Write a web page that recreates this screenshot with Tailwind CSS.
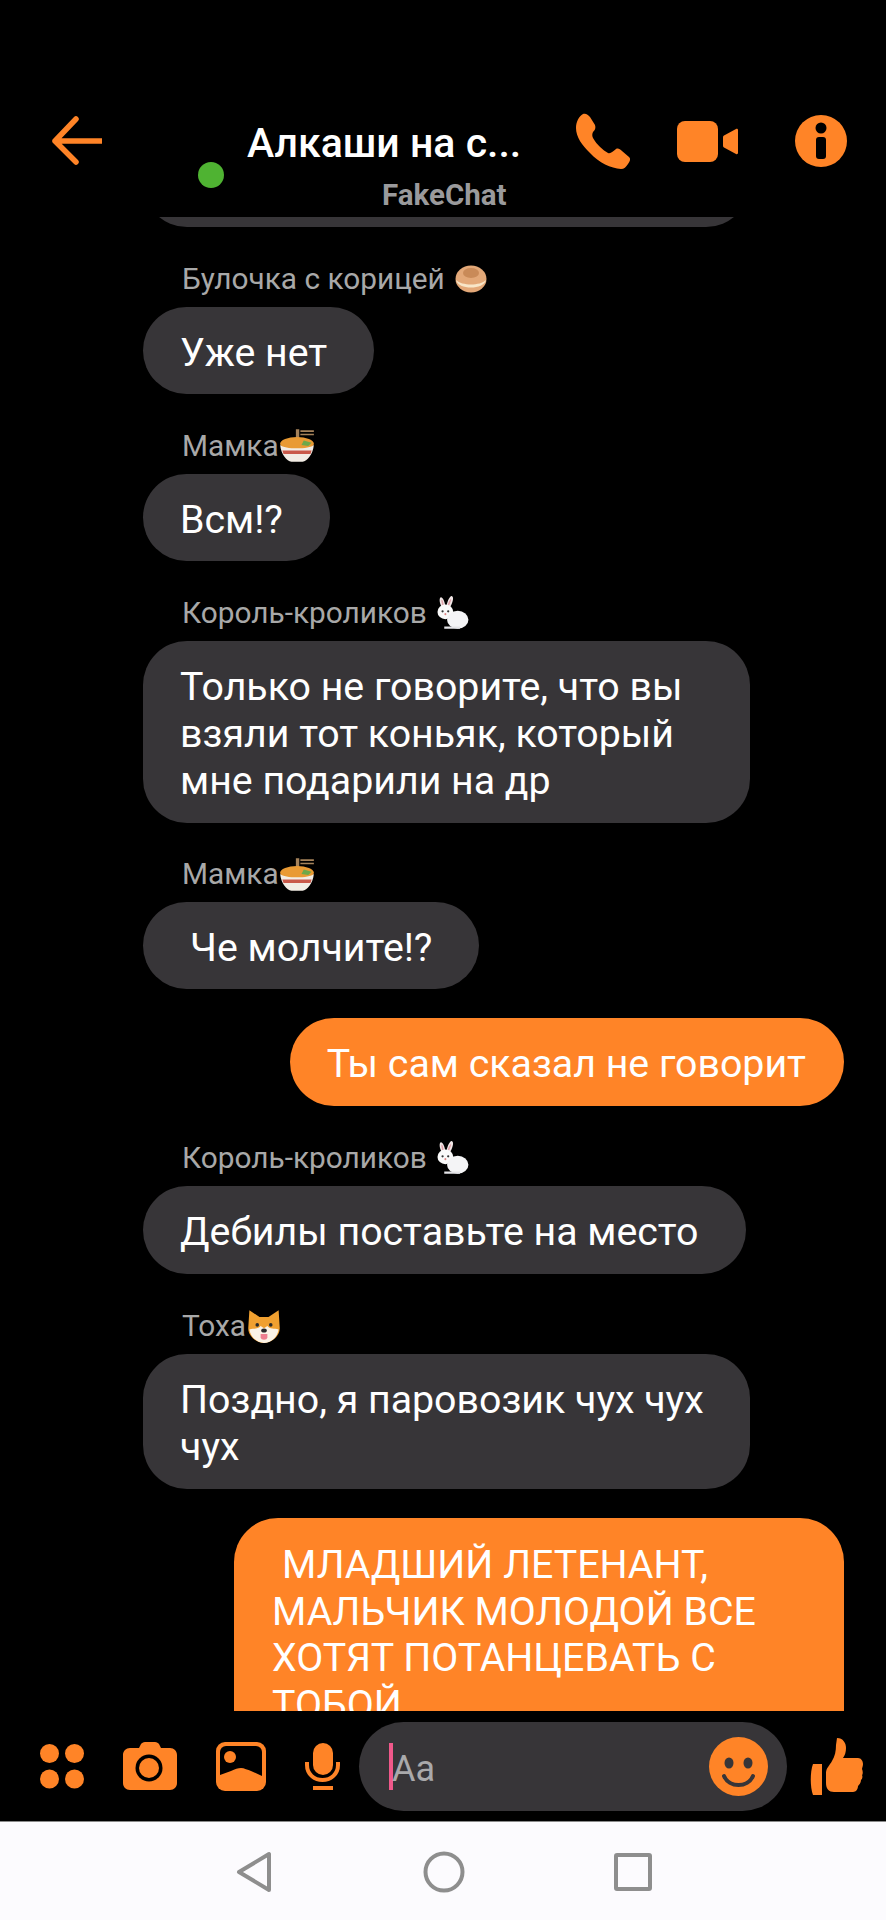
<!DOCTYPE html>
<html lang="ru">
  <head>
    <meta charset="UTF-8" />
    <meta name="viewport" content="width=device-width, initial-scale=1.0" />
    <title>FakeChat</title>
    <script src="https://cdn.jsdelivr.net/npm/@tailwindcss/browser@4"></script>
  </head>
  <body class="bg-black">
    <!-- Emoji drawn once, reused in the sender names -->
    <svg class="hidden" xmlns="http://www.w3.org/2000/svg">
      <symbol id="bagel" viewBox="0 0 32 32">
        <ellipse cx="16" cy="16" rx="15.500" ry="13.500" fill="#e3a878" />
        <ellipse cx="16" cy="10" rx="8" ry="5" fill="#c98a58" />
        <path d="M1 17c6 6 24 6 30 0-2 10-28 10-30 0Z" fill="#f8e6c8" />
      </symbol>
      <symbol id="bowl" viewBox="0 0 32 32">
        <path d="M15 1h3v9h-3zM19 2h12v1.500H19zM19 5h12v1.500H19z" fill="#a5825a" />
        <ellipse cx="16" cy="14" rx="15" ry="6" fill="#e99a34" />
        <path d="M22 11l7 2-3 3-6-1z" fill="#6ea84a" />
        <path d="M1 15c4 4 26 4 30 0-1 9-6 14-10 15H11C7 29 2 24 1 15Z" fill="#f2ece4" />
        <path d="M3 20h26l-1 3H4z" fill="#c9594a" />
      </symbol>
      <symbol id="rabbit" viewBox="0 0 32 32">
        <path d="M7 2c2 0 4 5 4 9H8C6 8 5 3 7 2ZM17 1c2 1 0 7-2 10h-3c0-4 3-11 5-10Z" fill="#f1e6e6" />
        <path d="M7.500 4c1 0 2 3 2 6H8.500C8 8 7 5 7.500 4ZM16 3.500c.5 1-1 4-2 6.500h-1c.3-3 2-6 3-6.500Z" fill="#e0a0a8" />
        <ellipse cx="11" cy="15" rx="7" ry="6.500" fill="#fafafa" />
        <ellipse cx="22" cy="22" rx="9.500" ry="8" fill="#f4f4f6" />
        <path d="M10 28h14v2H10z" fill="#e4e4e8" />
        <circle cx="8.500" cy="14.500" r="1" fill="#333" />
        <circle cx="13.500" cy="14.500" r="1" fill="#333" />
        <circle cx="11" cy="17" r=".9" fill="#d88" />
      </symbol>
      <symbol id="shiba" viewBox="0 0 32 32">
        <path d="M3 2l9 6h8l9-6 1 16c0 7-7 13-14 13S2 25 2 18Z" fill="#f0a030" />
        <path d="M3 19c4-1 8 0 10-3l3 2 3-2c2 3 6 2 10 3-1 7-7 12-13 12S4 26 3 19Z" fill="#fbf3e6" />
        <circle cx="10" cy="15" r="1.600" fill="#2a2a2a" />
        <circle cx="22" cy="15" r="1.600" fill="#2a2a2a" />
        <ellipse cx="16" cy="20" rx="2.500" ry="1.800" fill="#2a2a2a" />
        <path d="M13 23h6v3c0 3-6 3-6 0Z" fill="#ee7f8f" />
      </symbol>
    </svg>

    <div class="w-[886px] h-[1920px] flex flex-col overflow-hidden bg-black text-white font-[family-name:Roboto,sans-serif]">
      <!-- Header -->
      <div class="h-[217px] shrink-0 flex items-start pt-[113px] pl-[52px]">
        <svg class="mt-[3px] shrink-0" width="50" height="50" viewBox="0 0 50 50" fill="none" stroke="#ff8427" stroke-width="5.500" stroke-linecap="round" stroke-linejoin="round">
          <path d="M24 3 3 25l21 21M3 25h46" />
        </svg>
        <div class="ml-[96px] mt-[49px] w-[26px] h-[26px] rounded-full bg-[#4fb332] shrink-0"></div>
        <div class="ml-[23px] w-[280px] shrink-0 whitespace-nowrap">
          <p class="text-[41px] leading-[50px] font-medium mt-[5px]">Алкаши на с...</p>
          <p class="ml-[135px] mt-[11px] text-[29.500px] leading-[32px] font-bold text-[#9a9a9c]">FakeChat</p>
        </div>
        <svg class="ml-[48px] shrink-0" width="57" height="57" viewBox="0 0 57 57" fill="#ff8427">
          <path d="M8 1c3-1 5 1 7 3l5 8c1 3 0 5-2 7-1 2-1 4 0 6 4 7 10 12 15 15 3 1 5-2 8-4 2-1 4 0 6 2l7 6c2 2 1 4-1 7-2 3-4 5-7 5-10-1-22-6-31-16C7 32 1 24 1 15 1 9 4 3 8 1Z" />
        </svg>
        <svg class="ml-[44px] mt-[8px] shrink-0" width="62" height="42" viewBox="0 0 62 42" fill="#ff8427">
          <rect x="1" y="0" width="41" height="41" rx="8" />
          <path d="M47 17c0-1 0-2 1-2.500L60 8c1-.5 2 0 2 1v23c0 1-1 1.500-2 1l-12-6.500c-1-.5-1-1.500-1-2.500Z" />
        </svg>
        <svg class="ml-[57px] mt-[2px] shrink-0" width="52" height="52" viewBox="0 0 52 52">
          <circle cx="26" cy="26" r="26" fill="#ff8427" />
          <circle cx="26" cy="13" r="5.500" fill="#000" />
          <rect x="21" y="22" width="10" height="22" rx="3" fill="#000" />
        </svg>
      </div>

      <!-- Messages -->
      <div class="h-[1494px] shrink-0 overflow-hidden flex flex-col items-start pl-[143px] pr-[42px]">
        <!-- bottom of the bubble scrolled under the header -->
        <div class="w-[607px] h-[10px] shrink-0 overflow-hidden">
          <div class="h-[88px] -mt-[78px] rounded-[44px] bg-[#373538]"></div>
        </div>

        <div class="mt-[29px] h-[51px] pb-[5px] flex items-center gap-[8px] pl-[39px] text-[29.800px] text-[#a8a8a8] shrink-0">
          <span>Булочка с корицей</span>
          <svg width="36" height="32"><use href="#bagel" /></svg>
        </div>
        <div class="w-fit max-w-[607px] shrink-0 rounded-[44px] bg-[#373538] pl-[37px] pr-[47px] pt-[23px] pb-[17px] text-[39.300px] leading-[47px]">Уже нет</div>

        <div class="mt-[29px] h-[51px] pb-[5px] flex items-center pl-[39px] text-[29.800px] text-[#a8a8a8] shrink-0">
          <span>Мамка</span>
          <svg width="36" height="36"><use href="#bowl" /></svg>
        </div>
        <div class="w-fit max-w-[607px] shrink-0 rounded-[44px] bg-[#373538] pl-[37px] pr-[47px] pt-[23px] pb-[17px] text-[39.300px] leading-[47px]">Всм!?</div>

        <div class="mt-[29px] h-[51px] pb-[5px] flex items-center gap-[6px] pl-[39px] text-[29.800px] text-[#a8a8a8] shrink-0">
          <span>Король-кроликов</span>
          <svg width="36" height="36"><use href="#rabbit" /></svg>
        </div>
        <div class="w-fit max-w-[607px] shrink-0 rounded-[44px] bg-[#373538] px-[37px] pt-[23px] pb-[18px] text-[39.300px] leading-[47px]">Только не говорите, что вы взяли тот коньяк, который мне подарили на др</div>

        <div class="mt-[29px] h-[50px] pb-[5px] flex items-center pl-[39px] text-[29.800px] text-[#a8a8a8] shrink-0">
          <span>Мамка</span>
          <svg width="36" height="36"><use href="#bowl" /></svg>
        </div>
        <div class="w-fit max-w-[607px] shrink-0 rounded-[44px] bg-[#373538] pl-[47px] pr-[47px] pt-[23px] pb-[17px] text-[39.300px] leading-[47px]">Че молчите!?</div>

        <div class="self-end mt-[29px] w-fit max-w-[610px] shrink-0 rounded-[44px] bg-[#ff8427] pl-[37px] pr-[38px] pt-[23px] pb-[18px] text-[39.300px] leading-[47px]">Ты сам сказал не говорит</div>

        <div class="mt-[29px] h-[51px] pb-[5px] flex items-center gap-[6px] pl-[39px] text-[29.800px] text-[#a8a8a8] shrink-0">
          <span>Король-кроликов</span>
          <svg width="36" height="36"><use href="#rabbit" /></svg>
        </div>
        <div class="w-fit max-w-[607px] shrink-0 rounded-[44px] bg-[#373538] pl-[37px] pr-[48px] pt-[23px] pb-[18px] text-[39.300px] leading-[47px]">Дебилы поставьте на место</div>

        <div class="mt-[29px] h-[51px] pb-[5px] flex items-center pl-[39px] text-[29.800px] text-[#a8a8a8] shrink-0">
          <span>Тоха</span>
          <svg width="36" height="36"><use href="#shiba" /></svg>
        </div>
        <div class="w-fit max-w-[607px] shrink-0 rounded-[44px] bg-[#373538] px-[37px] pt-[23px] pb-[18px] text-[39.300px] leading-[47px]">Поздно, я паровозик чух чух чух</div>

        <div class="self-end mt-[29px] w-[610px] shrink-0 rounded-t-[44px] bg-[#ff8427] px-[38px] pt-[24px] pb-[19px] text-[39.300px] leading-[46.500px]"><span class="pl-[10px]">МЛАДШИЙ ЛЕТЕНАНТ,</span> МАЛЬЧИК МОЛОДОЙ ВСЕ ХОТЯТ ПОТАНЦЕВАТЬ С ТОБОЙ</div>
      </div>

      <!-- Composer -->
      <div class="h-[110px] shrink-0 flex items-center pl-[40px]">
        <svg width="44" height="45" viewBox="0 0 44 45" fill="#ff8427" class="shrink-0">
          <circle cx="9.500" cy="9.500" r="9.500" /><circle cx="34.500" cy="9.500" r="9.500" />
          <circle cx="9.500" cy="35" r="9.500" /><circle cx="34.500" cy="35" r="9.500" />
        </svg>
        <svg width="54" height="48" viewBox="0 0 54 48" class="ml-[39px] shrink-0">
          <path d="M7 6h9l2-4c1-1 2-2 4-2h10c2 0 3 1 4 2l2 4h9c4 0 7 3 7 7v28c0 4-3 7-7 7H7c-4 0-7-3-7-7V13c0-4 3-7 7-7Z" fill="#ff8427" />
          <circle cx="26" cy="26" r="13.500" fill="#000" />
          <circle cx="26" cy="26" r="10" fill="#ff8427" />
        </svg>
        <svg width="50" height="49" viewBox="0 0 50 49" class="ml-[39px] shrink-0">
          <rect x="0" y="0" width="50" height="49" rx="9" fill="#ff8427" />
          <rect x="4" y="4" width="42" height="36" rx="6" fill="#000" />
          <circle cx="14" cy="15" r="6" fill="#ff8427" />
          <path d="M4 33 15 29c4-2 7-3 10-3s7 2 10 3l11 5v10H4Z" fill="#ff8427" />
        </svg>
        <svg width="35" height="47" viewBox="0 0 35 47" fill="none" class="ml-[39px] shrink-0">
          <rect x="8" y="0" width="20" height="32" rx="10" fill="#ff8427" />
          <path d="M2 19v3c0 9 7 15 15.500 15S33 31 33 22v-3" stroke="#ff8427" stroke-width="4" />
          <rect x="8" y="43" width="20" height="4" fill="#ff8427" />
        </svg>
        <div class="ml-[19px] w-[428px] h-[89px] shrink-0 rounded-full bg-[#373538] flex items-center pl-[30px] pr-[19px]">
          <div class="w-[4px] h-[47px] bg-[#f0588a] shrink-0"></div>
          <span class="text-[36px] text-[#a9a9ab] mt-[5px] -ml-[1px]">Aa</span>
          <svg width="59" height="59" viewBox="0 0 59 59" class="ml-auto shrink-0">
            <circle cx="29.500" cy="29.500" r="29.500" fill="#ff8427" />
            <ellipse cx="20" cy="26" rx="4.500" ry="5.500" fill="#373538" />
            <ellipse cx="39" cy="26" rx="4.500" ry="5.500" fill="#373538" />
            <path d="M15 39c5 12 24 12 29 0" fill="none" stroke="#373538" stroke-width="4" stroke-linecap="round" />
          </svg>
        </div>
        <svg width="53" height="58" viewBox="0 0 53 58" fill="#ff8427" class="ml-[23px] shrink-0">
          <path d="M3 27h9v31H3C0 50 0 35 3 27Z" />
          <path d="M27 1c6 0 9 5 9 10 0 4-1 7-3 10h15c3 0 5 3 5 6 0 2-1 4-1 5 1 2 1 5 0 6 1 2 0 4-1 5 0 3-2 5-3 6 0 3-2 6-5 6H24c-5 0-8-3-8-9V36c0-5 4-8 6-12 3-5 4-10 4-16Z" />
        </svg>
      </div>

      <!-- Android nav bar -->
      <div class="h-[99px] shrink-0 bg-[#fcfbfe] border-t border-[#8a8a8a] flex items-start pt-[29px] pl-[236px]">
        <svg width="36" height="42" viewBox="0 0 36 42" fill="none" stroke="#8e8e8e" stroke-width="4" stroke-linejoin="round" class="shrink-0">
          <path d="M33 3v36L3 21Z" />
        </svg>
        <svg width="42" height="42" viewBox="0 0 42 42" fill="none" stroke="#8e8e8e" stroke-width="4" class="ml-[151px] shrink-0">
          <circle cx="21" cy="21" r="18.500" />
        </svg>
        <svg width="38" height="38" viewBox="0 0 38 38" fill="none" stroke="#8e8e8e" stroke-width="4" stroke-linejoin="round" class="ml-[149px] mt-[2px] shrink-0">
          <rect x="2" y="2" width="34" height="34" rx="1" />
        </svg>
      </div>
    </div>
  </body>
</html>
